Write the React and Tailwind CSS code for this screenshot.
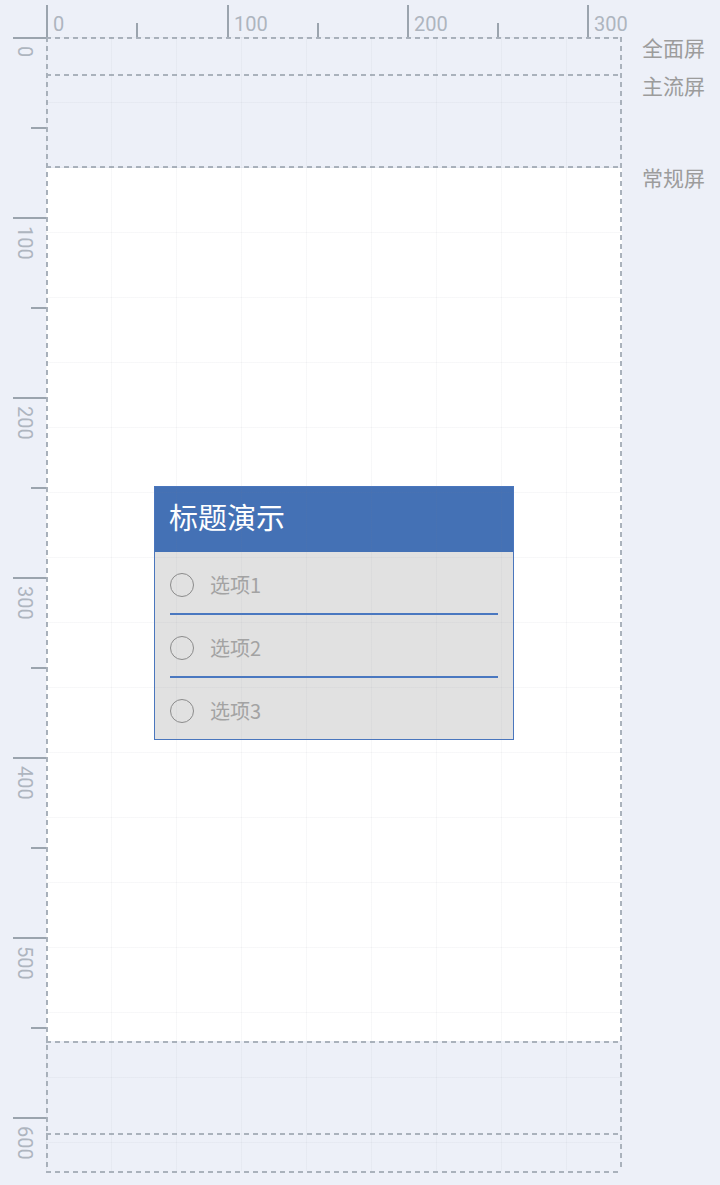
const CJK = "font-['Noto_Sans_CJK_SC','Noto_Sans',sans-serif]";
const NUM = "font-['Roboto','Liberation_Sans',sans-serif]";

// ruler ticks, in px from the canvas origin (1 unit = 1.8px)
const TOP_MAJOR = [
  { at: 0, label: '0' },
  { at: 181, label: '100' },
  { at: 361, label: '200' },
  { at: 541, label: '300' },
];
const TOP_MINOR = [90, 271, 451];

const LEFT_MAJOR = [
  { at: 0, label: '0' },
  { at: 180, label: '100' },
  { at: 360, label: '200' },
  { at: 540, label: '300' },
  { at: 720, label: '400' },
  { at: 900, label: '500' },
  { at: 1080, label: '600' },
];
const LEFT_MINOR = [90, 270, 450, 630, 810, 990];

const OPTIONS = ['选项1', '选项2', '选项3'];

const DashH = () => (
  <div className="h-[2px] w-full shrink-0 [background-image:repeating-linear-gradient(to_right,#aab2bc_0_5px,transparent_5px_9px)]" />
);

const TopRuler = () => (
  <div className="relative">
    {TOP_MAJOR.map((t) => (
      <div key={t.label}>
        <div className="absolute top-[5px] h-[32px] w-[1.5px] bg-[#9ba4ae]" style={{ left: t.at }} />
        <div
          className={`absolute top-[14px] text-[20px] leading-none text-[#aeb5bf] ${NUM}`}
          style={{ left: t.at + 7 }}
        >
          {t.label}
        </div>
      </div>
    ))}
    {TOP_MINOR.map((x) => (
      <div key={x} className="absolute top-[23px] h-[14px] w-[1.5px] bg-[#9ba4ae]" style={{ left: x }} />
    ))}
  </div>
);

const LeftRuler = () => (
  <div className="relative">
    {LEFT_MAJOR.map((t) => (
      <div key={t.label}>
        <div className="absolute left-[13px] h-[1.5px] w-[33px] bg-[#9ba4ae]" style={{ top: t.at }} />
        <div
          className={`absolute left-[15px] w-[20px] text-[20px] leading-none text-[#aeb5bf] [writing-mode:vertical-rl] ${NUM}`}
          style={{ top: t.at + 9 }}
        >
          {t.label}
        </div>
      </div>
    ))}
    {LEFT_MINOR.map((y) => (
      <div key={y} className="absolute left-[31px] h-[1.5px] w-[15px] bg-[#9ba4ae]" style={{ top: y }} />
    ))}
  </div>
);

const Dialog = () => (
  <div className="w-[360px] border border-[#4a76bd] bg-[#e1e1e1]">
    <div className="flex h-[65px] items-center bg-[#4471b5] pb-[6px] pl-[14px]">
      <span className={`text-[29px] leading-none text-white ${CJK}`}>标题演示</span>
    </div>
    <div className="flex flex-col px-[15px]">
      {OPTIONS.map((opt, i) => (
        <div key={opt} className="flex flex-col">
          <div className="flex h-[61px] items-center gap-[16px] pt-[4px]">
            <span className="h-[24px] w-[24px] rounded-full border-[1.5px] border-[#8b8b8b]" />
            <span className={`text-[20px] leading-none text-[#a3a3a3] ${CJK}`}>{opt}</span>
          </div>
          {i < OPTIONS.length - 1 && <div className="h-[2px] bg-[#4a78c0]" />}
        </div>
      ))}
    </div>
  </div>
);

const App = () => {
  return (
    <div className="grid h-[1185px] w-[720px] grid-cols-[46px_576px_1fr] grid-rows-[37px_1134px_1fr] overflow-hidden bg-[#edf0f8]">
      <div />
      <TopRuler />
      <div />

      <LeftRuler />

      {/* Canvas frame */}
      <div className="relative flex flex-col">
        <DashH />
        <div className="h-[35px] shrink-0" />
        <DashH />
        <div className="h-[90px] shrink-0" />
        <DashH />
        <div className="flex h-[873px] shrink-0 flex-col bg-white pl-[108px] pt-[318px]">
          <Dialog />
        </div>
        <DashH />
        <div className="h-[90px] shrink-0" />
        <DashH />
        <div className="h-[36px] shrink-0" />
        <DashH />

        {/* frame side edges */}
        <div className="pointer-events-none absolute inset-y-0 left-0 w-[2px] [background-image:repeating-linear-gradient(to_bottom,#aab2bc_0_5px,transparent_5px_9px)]" />
        <div className="pointer-events-none absolute inset-y-0 right-0 w-[2px] [background-image:repeating-linear-gradient(to_bottom,#aab2bc_0_5px,transparent_5px_9px)]" />

        {/* grid */}
        <div className="pointer-events-none absolute inset-0 [background-image:linear-gradient(to_right,rgba(120,130,150,0.06)_1px,transparent_1px),linear-gradient(to_bottom,rgba(120,130,150,0.06)_1px,transparent_1px)] [background-size:65px_65px]" />
      </div>

      {/* screen size labels */}
      <div className={`flex flex-col pl-[20px] text-[21px] leading-[21px] text-[#9c9c9c] ${CJK}`}>
        <span className="mt-0">全面屏</span>
        <span className="mt-[17px]">主流屏</span>
        <span className="mt-[71px]">常规屏</span>
      </div>
    </div>
  );
};

export default App;
